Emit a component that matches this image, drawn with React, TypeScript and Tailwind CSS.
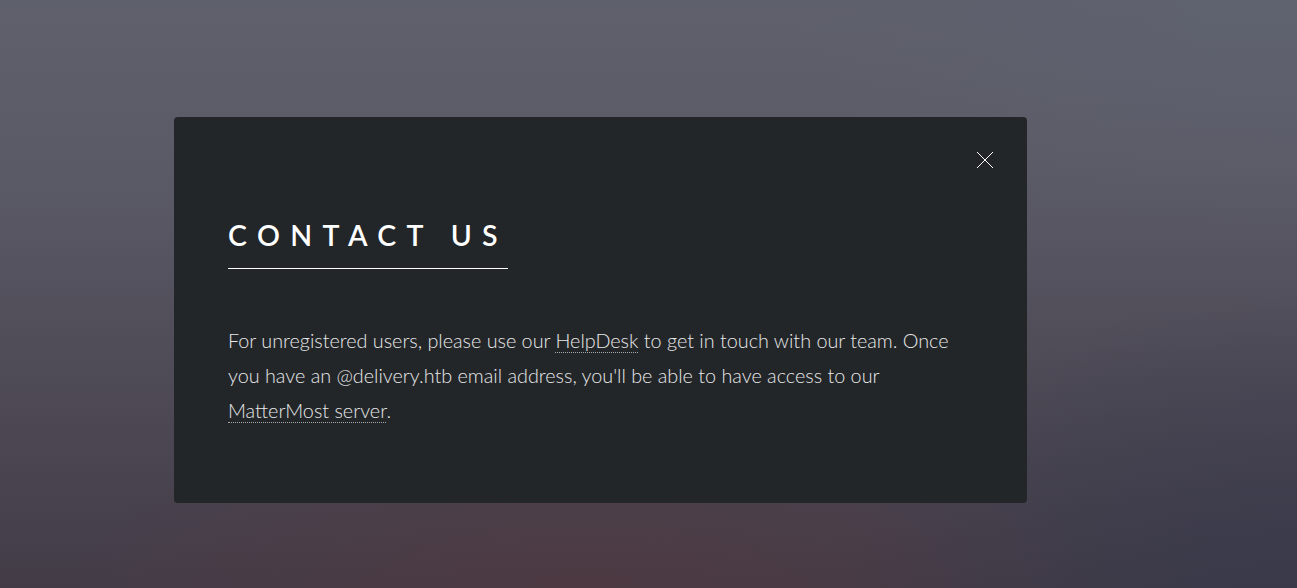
import React from "react";

export default function App() {
  return (
    <div
      className="relative w-full h-[588px] overflow-hidden"
      style={{ fontFamily: "Lato, 'Open Sans', sans-serif" }}
    >
      <div className="absolute inset-0 bg-[linear-gradient(180deg,#5e606b_0%,#5a5a66_30%,#4e4a56_65%,#433c47_100%)]" />
      <div className="absolute inset-0 bg-[radial-gradient(ellipse_40%_30%_at_45%_100%,rgba(85,55,62,0.55),transparent)]" />
      <div className="absolute inset-0 bg-[radial-gradient(ellipse_35%_50%_at_100%_100%,rgba(50,55,75,0.6),transparent)]" />
      <div className="absolute inset-0 bg-[radial-gradient(ellipse_40%_40%_at_100%_0%,rgba(96,102,116,0.5),transparent)]" />
      <div className="relative pt-[117px] pl-[174px]">
        <div className="relative w-[853px] h-[386px] rounded-[4px] bg-[#232629] px-[54px] pt-[100px]">
          <button className="absolute top-0 right-0 w-[85px] h-[85px] flex items-center justify-center">
            <svg width="18" height="18" viewBox="0 0 18 18">
              <path d="M1 1 L17 17 M17 1 L1 17" stroke="#ffffff" strokeWidth="1" />
            </svg>
          </button>
          <h2 className="inline-block text-white font-semibold text-[28.5px] leading-[36px] tracking-[10.4px] uppercase border-b border-white pb-[15px]">
            Contact Us
          </h2>
          <p className="mt-[54px] text-[#e8e8e8] font-light text-[19.8px] leading-[35px] w-[746px]">
            For unregistered users, please use our{" "}
            <a className="border-b border-dotted border-white/60">HelpDesk</a> to get in touch with our team.
            Once you have an @delivery.htb email address, you'll be able to have access to our{" "}
            <a className="border-b border-dotted border-white/60">MatterMost server</a>.
          </p>
        </div>
      </div>
    </div>
  );
}
